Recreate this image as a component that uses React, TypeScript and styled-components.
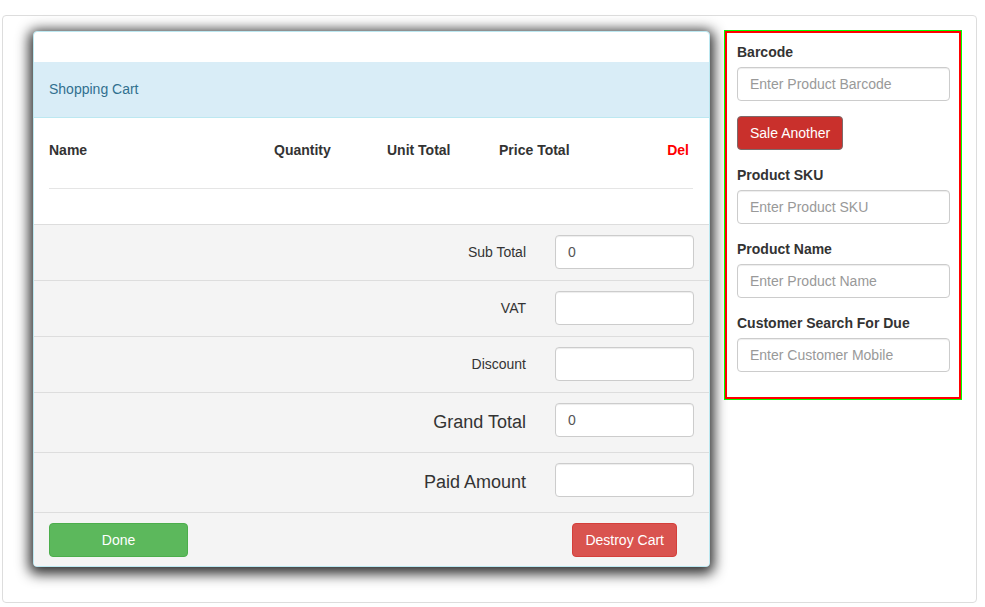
import React from "react";
import styled, { createGlobalStyle } from "styled-components";

const Global = createGlobalStyle`
  html, body { margin: 0; padding: 0; background: #fff; }
  body { font-family: "Liberation Sans", Arial, sans-serif; font-size: 14px; color: #333; line-height: 1.42857; }
  * { box-sizing: border-box; }
  input::placeholder { color: #999; opacity: 1; }
`;

const Page = styled.div`
  padding: 15px 0 0 2px;
`;

const Frame = styled.div`
  width: 975px;
  border: 1px solid #ddd;
  border-radius: 4px;
  padding: 15px 14px 35px 30px;
  display: flex;
  align-items: flex-start;
`;

const CartPanel = styled.div`
  width: 677px;
  border: 1px solid #bce8f1;
  border-radius: 4px;
  background: #fff;
  box-shadow: 0 3px 13px 4px rgba(0, 0, 0, 0.82);
  overflow: hidden;
`;

const TopSpace = styled.div`
  height: 30px;
`;

const Heading = styled.div`
  height: 56px;
  background: #d9edf7;
  border-bottom: 1px solid #bce8f1;
  color: #31708f;
  padding: 0 15px;
  display: flex;
  align-items: center;
`;

const HeadRow = styled.div`
  margin: 0 16px 0 15px;
  height: 71px;
  padding-top: 22px;
  border-bottom: 1px solid #e5e5e5;
  display: grid;
  grid-template-columns: 225px 113px 112px 1fr auto;
  align-items: start;
  font-weight: bold;
`;

const HeadCell = styled.div<{ $danger?: boolean }>`
  line-height: 20px;
  color: ${(p) => (p.$danger ? "#f00" : "#333")};
  padding-right: ${(p) => (p.$danger ? "4px" : "0")};
`;

const EmptyBody = styled.div`
  height: 35px;
`;

const SumRow = styled.div<{ $big?: boolean }>`
  background: #f4f4f4;
  border-top: 1px solid #ddd;
  padding: 10px 15px ${(p) => (p.$big ? "15px" : "11px")} 15px;
  display: flex;
  align-items: flex-start;
  justify-content: flex-end;
  gap: 29px;
`;

const SumLabel = styled.div<{ $big?: boolean }>`
  font-size: ${(p) => (p.$big ? "18px" : "14px")};
  line-height: 34px;
  height: 34px;
  color: #333;
  margin-top: ${(p) => (p.$big ? "2px" : "0")};
  margin-bottom: ${(p) => (p.$big ? "-2px" : "0")};
`;

const Input = styled.input`
  display: block;
  height: 34px;
  padding: 6px 12px;
  font-family: "Liberation Sans", Arial, sans-serif;
  font-size: 14px;
  color: #555;
  background: #fff;
  border: 1px solid #ccc;
  border-radius: 4px;
  box-shadow: inset 0 1px 1px rgba(0, 0, 0, 0.075);
  outline: none;
`;

const SumInput = styled(Input)`
  width: 139px;
`;

const Footer = styled.div`
  background: #f4f4f4;
  border-top: 1px solid #ddd;
  padding: 10px 32px 9px 15px;
  display: flex;
  justify-content: space-between;
`;

const Button = styled.button<{ $bg: string; $border: string; $w?: number }>`
  height: 34px;
  padding: 6px 12px;
  font-family: "Liberation Sans", Arial, sans-serif;
  font-size: 14px;
  line-height: 20px;
  color: #fff;
  background: ${(p) => p.$bg};
  border: 1px solid ${(p) => p.$border};
  border-radius: 4px;
  width: ${(p) => (p.$w ? `${p.$w}px` : "auto")};
  cursor: pointer;
`;

const SidePanel = styled.div`
  margin-left: 15px;
  width: 236px;
  border: 2px solid #f00;
  box-shadow: 0 0 0 1px #0f0;
  padding: 9px 9px 10px 10px;
`;

const Group = styled.div`
  margin-bottom: 15px;
`;

const Label = styled.label`
  display: block;
  font-weight: bold;
  line-height: 20px;
  margin-bottom: 5px;
`;

const SideInput = styled(Input)`
  width: 100%;
`;

export default function App() {
  return (
    <>
      <Global />
      <Page>
        <Frame>
          <CartPanel>
            <TopSpace />
            <Heading>Shopping Cart</Heading>
            <HeadRow>
              <HeadCell>Name</HeadCell>
              <HeadCell>Quantity</HeadCell>
              <HeadCell>Unit Total</HeadCell>
              <HeadCell>Price Total</HeadCell>
              <HeadCell $danger>Del</HeadCell>
            </HeadRow>
            <EmptyBody />
            <SumRow>
              <SumLabel>Sub Total</SumLabel>
              <SumInput defaultValue="0" />
            </SumRow>
            <SumRow>
              <SumLabel>VAT</SumLabel>
              <SumInput />
            </SumRow>
            <SumRow>
              <SumLabel>Discount</SumLabel>
              <SumInput />
            </SumRow>
            <SumRow $big>
              <SumLabel $big>Grand Total</SumLabel>
              <SumInput defaultValue="0" />
            </SumRow>
            <SumRow $big>
              <SumLabel $big>Paid Amount</SumLabel>
              <SumInput />
            </SumRow>
            <Footer>
              <Button $bg="#5cb85c" $border="#4cae4c" $w={139}>Done</Button>
              <Button $bg="#d9534f" $border="#d43f3a">Destroy Cart</Button>
            </Footer>
          </CartPanel>
          <SidePanel>
            <Group>
              <Label>Barcode</Label>
              <SideInput placeholder="Enter Product Barcode" />
            </Group>
            <Group>
              <Button $bg="#c9302c" $border="#7d6a6a">Sale Another</Button>
            </Group>
            <Group>
              <Label>Product SKU</Label>
              <SideInput placeholder="Enter Product SKU" />
            </Group>
            <Group>
              <Label>Product Name</Label>
              <SideInput placeholder="Enter Product Name" />
            </Group>
            <Group>
              <Label>Customer Search For Due</Label>
              <SideInput placeholder="Enter Customer Mobile" />
            </Group>
          </SidePanel>
        </Frame>
      </Page>
    </>
  );
}
